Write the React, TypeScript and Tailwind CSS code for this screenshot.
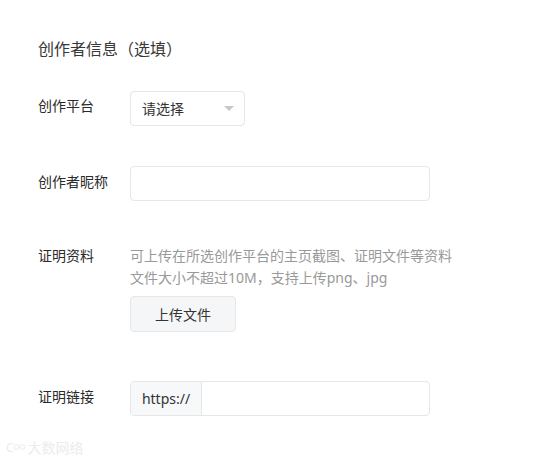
import React from "react";

export default function App() {
  const font = { fontFamily: '"Noto Sans", "Noto Sans CJK SC", sans-serif' };
  return (
    <div className="relative w-[555px] h-[459px] bg-white overflow-hidden" style={font}>
      <div className="pl-[38px] pt-[37px] flex flex-col">
        <div className="text-[16px] leading-[24px] text-[#383838]">创作者信息（选填）</div>

        <div className="flex mt-[30px]">
          <div className="w-[92px] text-[14px] leading-[20px] pt-[5px] text-[#2a2a2a]">创作平台</div>
          <div className="w-[115px] h-[35px] border border-[#e6e6e6] rounded-[4px] flex items-center justify-between pl-[11px] pr-[10px]">
            <span className="text-[14px] text-[#333]">请选择</span>
            <svg width="10" height="5" viewBox="0 0 10 5">
              <path d="M0 0 L10 0 L5 5 Z" fill="#c8c8c8" />
            </svg>
          </div>
        </div>

        <div className="flex mt-[40px]">
          <div className="w-[92px] text-[14px] leading-[20px] pt-[6px] text-[#2a2a2a]">创作者昵称</div>
          <div className="w-[300px] h-[35px] border border-[#e6e6e6] rounded-[4px]" />
        </div>

        <div className="flex mt-[44px]">
          <div className="w-[92px] text-[14px] leading-[22px] text-[#2a2a2a]">证明资料</div>
          <div className="flex flex-col">
            <div className="text-[14px] leading-[22px] text-[#999]">
              <div>可上传在所选创作平台的主页截图、证明文件等资料</div>
              <div>文件大小不超过10M，支持上传png、jpg</div>
            </div>
            <div className="mt-[7px] w-[106px] h-[36px] border border-[#e6e6e6] rounded-[4px] bg-[#f5f6f7] flex items-center justify-center text-[14px] text-[#333]">
              上传文件
            </div>
          </div>
        </div>

        <div className="flex mt-[49px]">
          <div className="w-[92px] text-[14px] leading-[20px] pt-[6px] text-[#2a2a2a]">证明链接</div>
          <div className="w-[300px] h-[35px] border border-[#e6e6e6] rounded-[4px] flex overflow-hidden">
            <div className="w-[71px] h-full bg-[#f7f8fa] border-r border-[#e6e6e6] flex items-center justify-center text-[14px] text-[#333]">
              https://
            </div>
            <div className="flex-1" />
          </div>
        </div>
      </div>

      <div className="absolute left-[6px] top-[437px] flex items-center gap-[2px] text-[14px] text-[#ececec]">
        <span className="text-[12px]">C∞</span>
        <span>大数网络</span>
      </div>
    </div>
  );
}
